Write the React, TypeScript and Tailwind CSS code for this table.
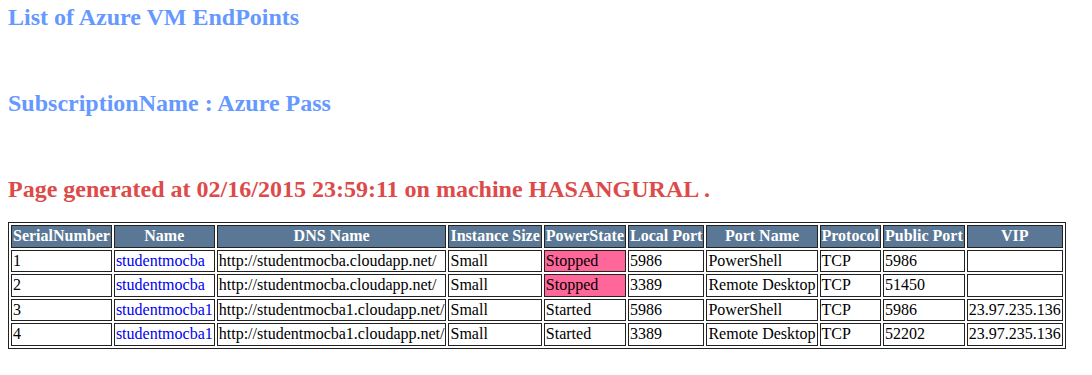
const rows = [
  { sn: "1", name: "studentmocba", dns: "http://studentmocba.cloudapp.net/", size: "Small", state: "Stopped", local: "5986", port: "PowerShell", proto: "TCP", pub: "5986", vip: "" },
  { sn: "2", name: "studentmocba", dns: "http://studentmocba.cloudapp.net/", size: "Small", state: "Stopped", local: "3389", port: "Remote Desktop", proto: "TCP", pub: "51450", vip: "" },
  { sn: "3", name: "studentmocba1", dns: "http://studentmocba1.cloudapp.net/", size: "Small", state: "Started", local: "5986", port: "PowerShell", proto: "TCP", pub: "5986", vip: "23.97.235.136" },
  { sn: "4", name: "studentmocba1", dns: "http://studentmocba1.cloudapp.net/", size: "Small", state: "Started", local: "3389", port: "Remote Desktop", proto: "TCP", pub: "52202", vip: "23.97.235.136" },
];

const headers = ["SerialNumber", "Name", "DNS Name", "Instance Size", "PowerState", "Local Port", "Port Name", "Protocol", "Public Port", "VIP"];

const td = "border border-[#222] p-[1px] text-left align-middle whitespace-nowrap";

export default function App() {
  return (
    <div className="min-h-screen bg-white px-[8px] pt-[3px] font-['Liberation_Serif',serif] text-[16px] text-black">
      <h2 className="text-[24px] font-bold leading-[28px] text-[#6699ff]">List of Azure VM EndPoints</h2>
      <h2 className="mt-[58px] text-[24px] font-bold leading-[28px] text-[#6699ff]">SubscriptionName : Azure Pass</h2>
      <h2 className="mt-[58px] text-[24px] font-bold leading-[28px] text-[#dd4a4a]">
        Page generated at 02/16/2015 23:59:11 on machine HASANGURAL .
      </h2>

      <table className="mt-[19px] border-separate border-spacing-[2px] border border-[#222] leading-[18.6px]">
        <thead>
          <tr>
            {headers.map((h) => (
              <th key={h} className="border border-[#222] bg-[#5a7896] p-[1px] text-center font-bold whitespace-nowrap text-white">
                {h}
              </th>
            ))}
          </tr>
        </thead>
        <tbody>
          {rows.map((r) => (
            <tr key={r.sn + r.local}>
              <td className={td}>{r.sn}</td>
              <td className={td}>
                <span className="text-[#0000ee]">{r.name}</span>
              </td>
              <td className={td}>{r.dns}</td>
              <td className={td}>{r.size}</td>
              <td className={r.state === "Stopped" ? td + " bg-[#ff6699]" : td}>{r.state}</td>
              <td className={td}>{r.local}</td>
              <td className={td}>{r.port}</td>
              <td className={td}>{r.proto}</td>
              <td className={td}>{r.pub}</td>
              <td className={td}>{r.vip}</td>
            </tr>
          ))}
        </tbody>
      </table>
    </div>
  );
}
